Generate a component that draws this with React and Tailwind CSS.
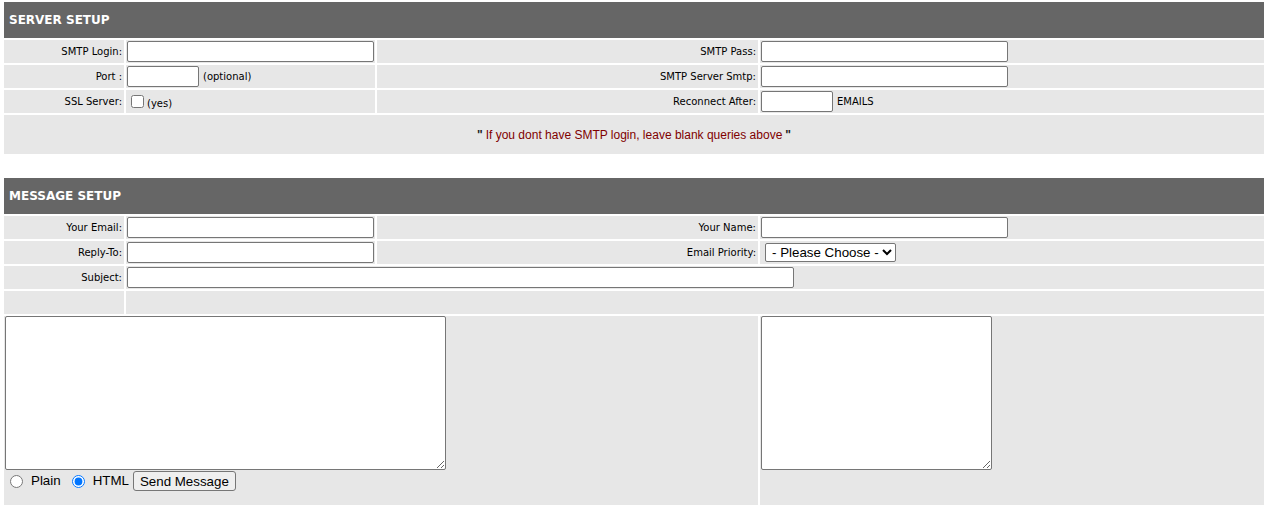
import React from "react";

const label = "font-['DejaVu_Sans',Verdana,sans-serif] text-[10px] text-black";
const field =
  "h-[21px] border border-[#767676] rounded-[2px] bg-white px-[2px] text-[13.333px] font-['Liberation_Sans',Arial,sans-serif]";

const Cell = ({ className = "", children }) => (
  <div className={`h-[23px] bg-[#e7e7e7] flex items-center px-[1px] ${className}`}>{children}</div>
);

const LabelCell = ({ text }) => (
  <Cell className={`justify-end pr-[2px] ${label}`}>{text}</Cell>
);

const Header = ({ title }) => (
  <div className="col-span-4 h-[36px] bg-[#666666] flex items-center pl-[5px]">
    <span className="font-['DejaVu_Sans',Verdana,sans-serif] font-bold text-[12px] text-white">{title}</span>
  </div>
);

const grid = "grid grid-cols-[120px_249px_381px_504px] gap-[2px] p-[2px] w-[1264px]";

export default function App() {
  return (
    <div className="bg-white min-h-[511px] pl-[2px] font-['Liberation_Sans',Arial,sans-serif]">
      {/* server setup */}
      <div className={grid}>
        <Header title="SERVER SETUP" />
        <LabelCell text="SMTP Login:" />
        <Cell>
          <input className={`${field} w-[247px]`} />
        </Cell>
        <LabelCell text="SMTP Pass:" />
        <Cell>
          <input type="password" className={`${field} w-[247px]`} />
        </Cell>

        <LabelCell text="Port :" />
        <Cell>
          <input className={`${field} w-[72px]`} />
          <span className={`${label} ml-[4px]`}>(optional)</span>
        </Cell>
        <LabelCell text="SMTP Server Smtp:" />
        <Cell>
          <input className={`${field} w-[247px]`} />
        </Cell>

        <LabelCell text="SSL Server:" />
        <Cell>
          <input type="checkbox" className="w-[13px] h-[13px] ml-[4px] mr-[3px]" />
          <span className={`${label} mt-[4px]`}>(yes)</span>
        </Cell>
        <LabelCell text="Reconnect After:" />
        <Cell>
          <input className={`${field} w-[72px]`} />
          <span className={`${label} ml-[4px]`}>EMAILS</span>
        </Cell>

        <div className="col-span-4 h-[39px] bg-[#e7e7e7] flex items-center justify-center text-[12px] text-[#800000]">
          <b className="text-[#222]">"</b>
          <span className="mx-[3px]">If you dont have SMTP login, leave blank queries above</span>
          <b className="text-[#222]">"</b>
        </div>
      </div>

      <div className="h-[20px]" />

      {/* message setup */}
      <div className={grid}>
        <Header title="MESSAGE SETUP" />
        <LabelCell text="Your Email:" />
        <Cell>
          <input className={`${field} w-[247px]`} />
        </Cell>
        <LabelCell text="Your Name:" />
        <Cell>
          <input className={`${field} w-[247px]`} />
        </Cell>

        <LabelCell text="Reply-To:" />
        <Cell>
          <input className={`${field} w-[247px]`} />
        </Cell>
        <LabelCell text="Email Priority:" />
        <Cell>
          <select className="ml-[4px] h-[19px] w-[131px] border border-[#767676] rounded-[2px] bg-white text-[13.333px] text-black pl-[2px]">
            <option>- Please Choose -</option>
            <option>High</option>
            <option>Normal</option>
            <option>Low</option>
          </select>
        </Cell>

        <LabelCell text="Subject:" />
        <Cell className="col-span-3">
          <input className={`${field} w-[667px]`} />
        </Cell>

        <Cell />
        <Cell className="col-span-3" />

        <div className="col-span-3 h-[189px] bg-[#e7e7e7] flex flex-col items-start px-[1px]">
          <textarea className="w-[441px] h-[154px] border border-[#767676] rounded-[2px] bg-white" />
          <div className="flex items-center text-[13.333px] text-black mt-[1px]">
            <input type="radio" name="fmt" className="w-[13px] h-[13px] ml-[5px] mr-[3px] mt-[1px]" />
            <span className="ml-[5px] mr-[6px]">Plain</span>
            <input type="radio" name="fmt" defaultChecked className="w-[13px] h-[13px] ml-[5px] mr-[3px] mt-[1px]" />
            <span className="ml-[5px]">HTML</span>
            <button className="ml-[4px] h-[20px] px-[6px] border border-[#767676] rounded-[3px] bg-[#efefef] text-[13.333px]">
              Send Message
            </button>
          </div>
        </div>
        <div className="h-[189px] bg-[#e7e7e7] px-[1px]">
          <textarea className="w-[231px] h-[154px] border border-[#767676] rounded-[2px] bg-white" />
        </div>
      </div>
    </div>
  );
}
